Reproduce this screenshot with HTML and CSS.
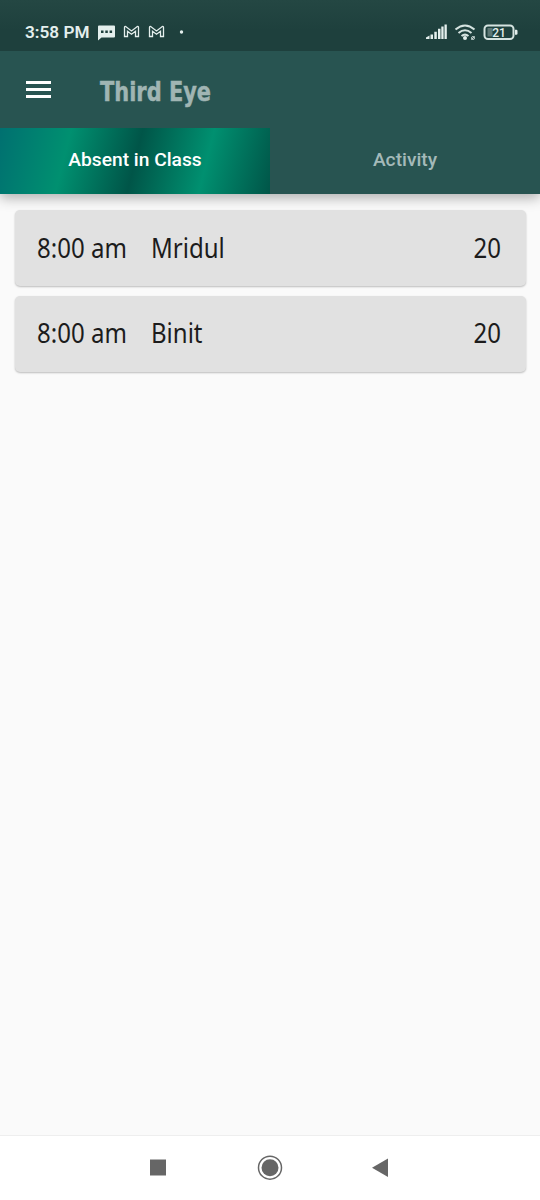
FILE: index.html
```
<!DOCTYPE html>
<html lang="en">
<head>
    <meta charset="UTF-8">
    <meta name="viewport" content="width=device-width, initial-scale=1.0">
    <title>Third Eye</title>
    <link rel="stylesheet" href="styles.css">
</head>
<body>

    <header>
        <div class="status-bar">
            <span class="clock">3:58 PM</span>
            <svg class="notifications" width="90" height="20" viewBox="0 0 90 20">
                <path class="solid" d="M0 4.500q0-1 1-1h15q1 0 1 1v10q0 1-1 1H3.500L0 18.500z"/>
                <path class="dots" d="M3 8.500h2.500v2.500H3zM7.300 8.500h2.500v2.500H7.300zM11.600 8.500h2.500v2.500h-2.500z"/>
                <path id="mail" class="line" d="M26.500 14.500V5.500q0-1.500 1.500-.8l5.500 4.200 5.500-4.200q1.500-.7 1.500.8v9h-3V9.300L33.500 12.300 29.500 9.300v5.200z"/>
                <use href="#mail" x="25"/>
                <circle class="solid" cx="83.500" cy="10" r="1.700"/>
            </svg>
            <svg class="system" width="94" height="20" viewBox="0 0 94 20">
                <path class="solid" d="M0 17v-1.500l3.500-2V17zM4.500 12.500h2.500V17H4.500zM8.300 9.800h2.500V17H8.300zM12 6.800h2.500V17H12zM15.300 4.500h2.300V17h-2.300zM18.500 2.500h2.300V17h-2.300z"/>
                <g class="wifi">
                    <path d="M29.500 7.500q9.500-8 19 0"/>
                    <path d="M32.500 11q6.500-5.500 13 0"/>
                    <path d="M35.500 14q3.500-2.800 7 0"/>
                </g>
                <circle class="solid" cx="39" cy="16" r="2"/>
                <circle class="line thin" cx="47" cy="16" r="1.500"/>
                <path class="line thin" d="M45.300 17.700l3.400-3.400"/>
                <rect class="battery" x="58.500" y="3.500" width="29" height="13.500" rx="3.500"/>
                <rect class="charge" x="61.500" y="6" width="5" height="8.500"/>
                <path class="solid" d="M89 7.700h1.300q1.200 0 1.200 1.200v2.700q0 1.200-1.200 1.200H89z"/>
                <text x="66.200" y="14.500">21</text>
            </svg>
        </div>

        <div class="app-bar">
            <svg class="menu" width="26" height="18" viewBox="0 0 26 18">
                <path d="M0 0h25v3H0zM0 7h25v3H0zM0 14h25v3H0z"/>
            </svg>
            <h1>Third Eye</h1>
        </div>

        <nav>
            <a class="active">Absent in Class</a>
            <a>Activity</a>
        </nav>
    </header>

    <main>
        <div class="card">
            <span class="time">8:00 am</span>
            <span class="name">Mridul</span>
            <span class="count">20</span>
        </div>
        <div class="card">
            <span class="time">8:00 am</span>
            <span class="name">Binit</span>
            <span class="count">20</span>
        </div>
    </main>

    <footer>
        <svg width="18" height="26" viewBox="0 0 18 26"><path d="M0 4.500h16v16H0z"/></svg>
        <svg width="26" height="26" viewBox="0 0 26 26"><circle cx="13" cy="12.700" r="8.500"/><circle class="ring" cx="13" cy="12.700" r="11.500"/></svg>
        <svg width="18" height="26" viewBox="0 0 18 26"><path d="M0 12.700L16 3.500v18.500z"/></svg>
    </footer>

</body>
</html>
```
FILE: styles.css
```
* {
    margin: 0;
    padding: 0;
    box-sizing: border-box;
}

body {
    font-family: Roboto, sans-serif;
    background-color: #fafafa;
    display: flex;
    flex-direction: column;
    height: 1200px;
    overflow: hidden;
}

header {
    background-color: #285451;
    box-shadow: 0 4px 12px rgba(0, 0, 0, 0.3);
}

.status-bar {
    height: 51px;
    display: flex;
    align-items: center;
    padding: 13px 20px 0 25px;
    background: linear-gradient(#244743, #1e403d 60%);
    color: #e4efed;
}

.clock {
    width: 73px;
    font-size: 17.2px;
    font-weight: 600;
    white-space: nowrap;
}

.system {
    margin-left: auto;
}

.status-bar .solid {
    fill: #e4efed;
}

.status-bar .dots {
    fill: #1e403d;
}

.status-bar .line {
    fill: none;
    stroke: #e4efed;
    stroke-width: 1.3;
}

.status-bar .thin {
    stroke-width: 0.8;
}

.wifi, .battery {
    fill: none;
    stroke: #d5e3e0;
    stroke-width: 2;
}

.charge {
    fill: #5d7774;
}

.system text {
    fill: #e4efed;
    font-size: 12px;
    font-weight: 500;
}

.app-bar {
    height: 77px;
    display: flex;
    align-items: center;
    padding: 0 26px;
}

.menu {
    fill: #fff;
    margin-right: 48px;
}

h1 {
    font-family: "DejaVu Sans", sans-serif;
    font-size: 27px;
    font-weight: bold;
    line-height: 32px;
    white-space: nowrap;
    color: #a0b5b3;
    -webkit-text-stroke: 0.5px #a0b5b3;
    transform: scaleX(0.775);
    transform-origin: left;
    margin-top: 5px;
}

nav {
    display: flex;
    height: 66px;
}

nav a {
    flex: 1;
    display: flex;
    align-items: center;
    justify-content: center;
    padding-bottom: 3px;
    font-size: 19.2px;
    font-weight: 500;
    color: #a4bab9;
}

nav a.active {
    color: #fff;
    background: linear-gradient(104deg, #007070, #009070 25%, #005548 50%, #009070 75%, #005548);
}

main {
    flex: 1;
    padding: 16px 14.5px;
}

.card {
    height: 76px;
    margin-bottom: 9.6px;
    padding: 0 24.5px 2px 22.5px;
    display: flex;
    align-items: center;
    background-color: #e1e1e1;
    border-radius: 5px;
    box-shadow: 0 1px 2px rgba(0, 0, 0, 0.25);
    font-family: "Noto Sans", sans-serif;
    font-size: 27px;
    color: #1c1c1c;
}

/* narrow the letters a little */
.card span {
    transform: scaleX(0.89);
    transform-origin: left;
}

.card .time {
    width: 114px;
}

.card .count {
    margin-left: auto;
    transform-origin: right;
}

footer {
    height: 65px;
    display: flex;
    align-items: center;
    justify-content: center;
    gap: 89px;
    background-color: #fff;
    border-top: 1px solid #eee;
    fill: #666;
}

footer .ring {
    fill: none;
    stroke: #666;
    stroke-width: 1.5;
}
```
